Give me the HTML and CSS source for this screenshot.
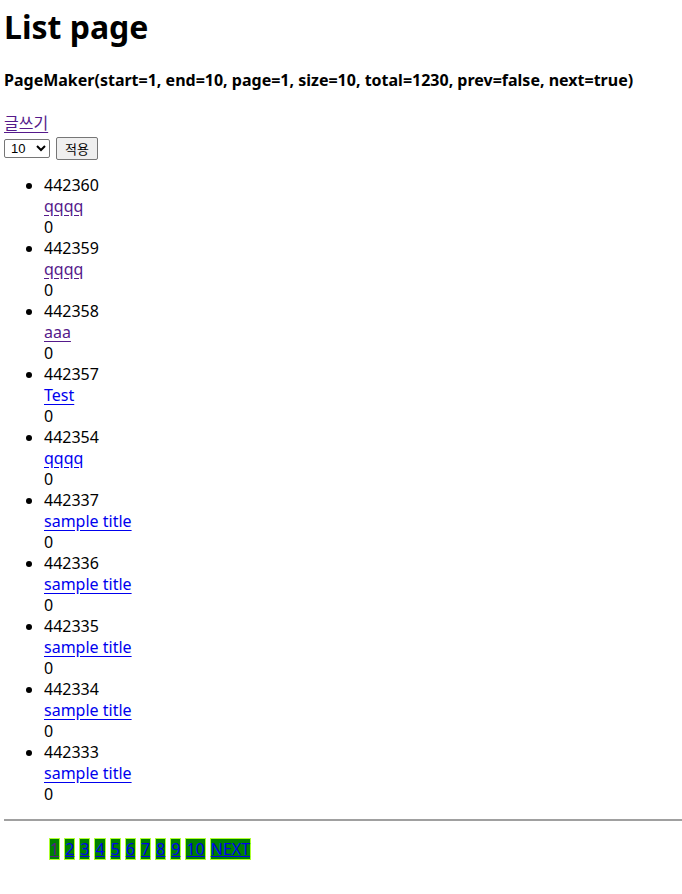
FILE: index.html
```html
<!DOCTYPE html>
<html lang="ko">
<head>
<meta charset="utf-8">
<title>List page</title>
<link rel="stylesheet" href="styles.css">
</head>
<body>
<h1 class="title">List page</h1>
<h3 class="maker">PageMaker(start=1, end=10, page=1, size=10, total=1230, prev=false, next=true)</h3>
<div class="tools">
  <a class="link visited" href="#">글쓰기</a>
  <div class="controls">
    <select class="amount">
      <option>10</option>
      <option>20</option>
      <option>50</option>
    </select>
    <button class="apply" type="button">적용</button>
  </div>
</div>
<ul class="board">
  <li><div>442360</div><div><a class="link visited" href="#">qqqq</a></div><div>0</div></li>
  <li><div>442359</div><div><a class="link visited" href="#">qqqq</a></div><div>0</div></li>
  <li><div>442358</div><div><a class="link visited" href="#">aaa</a></div><div>0</div></li>
  <li><div>442357</div><div><a class="link" href="#">Test</a></div><div>0</div></li>
  <li><div>442354</div><div><a class="link" href="#">qqqq</a></div><div>0</div></li>
  <li><div>442337</div><div><a class="link" href="#">sample title</a></div><div>0</div></li>
  <li><div>442336</div><div><a class="link" href="#">sample title</a></div><div>0</div></li>
  <li><div>442335</div><div><a class="link" href="#">sample title</a></div><div>0</div></li>
  <li><div>442334</div><div><a class="link" href="#">sample title</a></div><div>0</div></li>
  <li><div>442333</div><div><a class="link" href="#">sample title</a></div><div>0</div></li>
</ul>
<hr class="divider">
<ul class="pagination">
  <li><a class="link visited" href="#">1</a></li>
  <li><a class="link" href="#">2</a></li>
  <li><a class="link" href="#">3</a></li>
  <li><a class="link" href="#">4</a></li>
  <li><a class="link" href="#">5</a></li>
  <li><a class="link" href="#">6</a></li>
  <li><a class="link" href="#">7</a></li>
  <li><a class="link" href="#">8</a></li>
  <li><a class="link" href="#">9</a></li>
  <li><a class="link" href="#">10</a></li>
  <li><a class="link" href="#">NEXT</a></li>
</ul>
</body>
</html>
```
FILE: styles.css
```css
html, body {
  background: #fff;
}
body {
  margin: 0;
  padding: 0 0 0 4px;
  font-family: "Noto Sans", "Noto Sans CJK KR", sans-serif;
  font-size: 16px;
  line-height: 21px;
  color: #000;
}
.title {
  margin: 6px 0 0;
  font-size: 32px;
  line-height: 42px;
  font-weight: 700;
}
.maker {
  margin: 22px 0 0;
  font-size: 16px;
  line-height: 21px;
  font-weight: 700;
}
.tools {
  margin-top: 22px;
}
.link {
  color: #0000ee;
  text-decoration: underline;
  text-underline-offset: 3px;
}
.link.visited {
  color: #551a8b;
}
.controls {
  display: flex;
  align-items: center;
  gap: 6px;
  height: 24px;
  margin-top: 2px;
}
.amount {
  width: 46px;
  height: 19px;
  font-family: "Liberation Sans", Arial, sans-serif;
  font-size: 13px;
  padding: 0 2px;
  border: 1px solid #767676;
  border-radius: 2px;
  background: #fff;
  color: #000;
}
.apply {
  height: 23px;
  padding: 0 8px;
  font-family: "Noto Sans CJK KR", sans-serif;
  font-size: 13px;
  line-height: 19px;
  border: 1px solid #767676;
  border-radius: 2px;
  background: #efefef;
  color: #000;
}
.board {
  margin: 15px 0 0;
  padding-left: 40px;
  list-style: disc;
}
.board li div {
  line-height: 21px;
}
.divider {
  margin: 14px 0 0;
  height: 0;
  border: 0;
  border-top: 2px solid #a0a0a0;
}
.pagination {
  display: flex;
  gap: 4px;
  margin: 17px 0 0;
  padding-left: 45px;
  list-style: none;
}
.pagination li {
  background: #008000;
  border: 1px solid #adff2f;
  line-height: 20px;
  padding: 0;
}
.pagination .link {
  text-underline-offset: 1px;
}
```
